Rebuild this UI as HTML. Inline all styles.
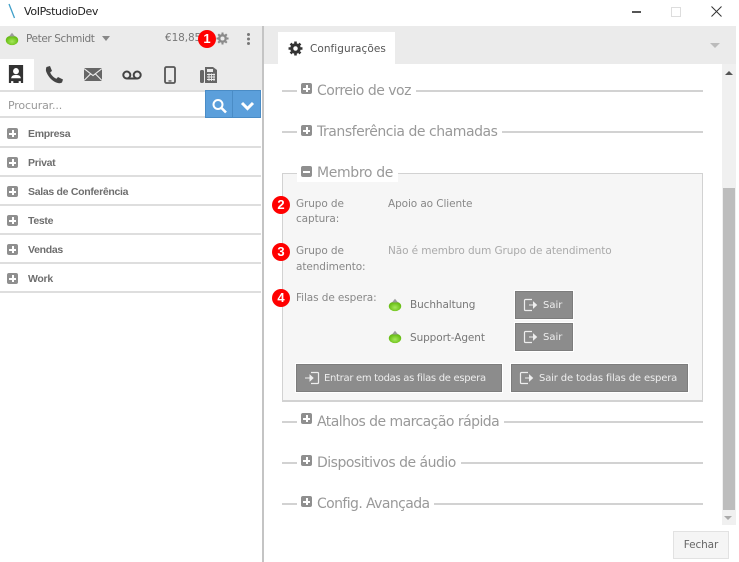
<!DOCTYPE html>
<html><head><meta charset="utf-8">
<style>
html,body{margin:0;padding:0;background:#fff}
#r{position:relative;width:739px;height:562px;overflow:hidden;background:#fff;font-family:"DejaVu Sans","Liberation Sans",sans-serif;color:#777}
#r>*{position:absolute}
.t{white-space:nowrap;position:absolute}
.h{font-size:14px;color:#999;background:#fff;padding:0 5px 0 20px;line-height:18px;white-space:nowrap;position:absolute;left:297px}
.ln{position:absolute;left:282px;width:421px;height:2px;background:#d2d2d2}
.pm{position:absolute;width:11px;height:11px;background:#8f8f8f;border-radius:2px}
.pm:before{content:"";position:absolute;left:2px;top:4.5px;width:7px;height:2px;background:#fff}
.pm.p:after{content:"";position:absolute;left:4.5px;top:2px;width:2px;height:7px;background:#fff}
.row{position:absolute;left:0;width:261px;height:27px;border-bottom:2px solid #dedede}
.row .pm{left:7px;top:9px}
.row .t{left:28px;top:8px;font:bold 10.5px/14px "Liberation Sans",sans-serif;color:#6e6e6e;letter-spacing:-.3px}
.b{position:absolute;width:18px;height:18px;border-radius:50%;background:#f00;color:#fff;font:bold 13px/18px "Liberation Sans",sans-serif;text-align:center;z-index:3}
.lb{font-size:10.5px;color:#888;line-height:15.5px;position:absolute;letter-spacing:-.1px;white-space:nowrap}
.btn{position:absolute;background:#8c8c8c;border:1px solid #7d7d7d;box-sizing:border-box;color:#eee;font-size:10px;white-space:nowrap;box-shadow:0 0 0 1px #fff}
.btn svg{position:absolute;left:7px;top:6px}
.btn span{position:absolute;top:7px;line-height:14px}
.st{position:absolute}
</style></head><body>
<div id="r">
<svg width="0" height="0" style="left:0;top:0"><defs><radialGradient id="g" cx=".5" cy=".62" r=".55"><stop offset="0" stop-color="#a5e85a"/><stop offset="1" stop-color="#62b90e"/></radialGradient></defs></svg>
<!-- title bar -->
<svg style="left:7px;top:3px" width="10" height="16"><path d="M2 1 L7.5 15" stroke="#3f9fc9" stroke-width="1.3"/></svg>
<div class="t" style="left:24px;top:5px;font:11px/14px 'DejaVu Sans',sans-serif;color:#222;letter-spacing:-.35px">VoIPstudioDev</div>
<div style="left:632px;top:11px;width:9px;height:1.5px;background:#555"></div>
<div style="left:671px;top:7px;width:8px;height:8px;border:1px solid #ddd"></div>
<svg style="left:711px;top:6px" width="11" height="11"><path d="M.5 .5L10.5 10.5M10.5 .5L.5 10.5" stroke="#333" stroke-width="1"/></svg>

<!-- left header -->
<div style="left:0;top:26px;width:262px;height:64px;background:#ebebeb"></div>
<svg class="st" style="left:5px;top:32px" width="14" height="14"><ellipse cx="7" cy="8.300" rx="6.200" ry="4.800" fill="url(#g)"/><path d="M7 .8L10 4.500H4Z" fill="#9c9c9c"/></svg>
<div class="t" style="left:26px;top:32px;font-size:10.500px;color:#777;line-height:14px;letter-spacing:-.4px">Peter Schmidt</div>
<div style="left:102px;top:36px;width:0;height:0;border:4.500px solid transparent;border-top:5px solid #888;border-bottom:0"></div>
<div class="t" style="left:165px;top:31px;font-size:10.500px;color:#777;line-height:14px;letter-spacing:-.1px">€18,85</div>
<div class="b" style="left:198px;top:30px">1</div>
<svg style="left:216px;top:32px" width="13" height="13" viewBox="0 0 14 14"><circle cx="7" cy="7" r="3.500" fill="none" stroke="#8a8a8a" stroke-width="2.600"/><path d="M7 .5V13.500M.5 7H13.500M2.400 2.400L11.600 11.600M11.600 2.400L2.400 11.600" stroke="#8a8a8a" stroke-width="2.200" stroke-dasharray="2.300 8.900 2.300"/></svg>
<div style="left:247px;top:33px;width:3px;height:3px;background:#777;border-radius:50%;box-shadow:0 4.500px 0 #777,0 9px 0 #777"></div>

<!-- tabs -->
<div style="left:0;top:59px;width:34px;height:31px;background:#fff"></div>
<svg style="left:8px;top:65px" width="16" height="18" viewBox="0 0 18 19" preserveAspectRatio="none"><path d="M1 0H17V19H14.500V17H12V19H6V17H3.500V19H1Z" fill="#333"/><circle cx="9" cy="6.500" r="3.300" fill="#fff"/><path d="M3.500 14C4 11 6 10.500 9 10.500C12 10.500 14 11 14.500 14Z" fill="#fff"/></svg>
<svg style="left:45px;top:65px" width="19" height="19" viewBox="0 0 19 19"><path d="M1.500 2L5 1L7 6L5.200 7.300C6 10 8.500 12.500 11.500 13.800L13 12L18 14.500L17 17.500C15.500 18.500 13 18.500 10 17C5.500 14.500 2.500 10.500 1 6C.8 4.500 1 3 1.500 2Z" fill="#444"/></svg>
<svg style="left:84px;top:68px" width="18" height="13" viewBox="0 0 18 13"><rect width="18" height="13" fill="#666"/><path d="M0 .5L9 7.500L18 .5M0 12.500L6.500 6M18 12.500L11.500 6" stroke="#eee" stroke-width="1.100" fill="none"/></svg>
<svg style="left:122px;top:70px" width="20" height="10" viewBox="0 0 20 10"><circle cx="4.800" cy="5" r="3.500" fill="none" stroke="#444" stroke-width="2"/><circle cx="15.200" cy="5" r="3.500" fill="none" stroke="#444" stroke-width="2"/><path d="M4.800 8.500H15.200" stroke="#444" stroke-width="2"/></svg>
<svg style="left:164px;top:66px" width="12" height="18" viewBox="0 0 12 18"><rect x="1" y="1" width="10" height="16" rx="1.500" fill="none" stroke="#555" stroke-width="1.800"/><rect x="4.500" y="14.300" width="3" height="1.300" fill="#555"/></svg>
<svg style="left:200px;top:66px" width="18" height="18" viewBox="0 0 18 18"><rect x="0" y="4" width="4" height="13" rx="1.500" fill="#666"/><path d="M5 1H13L17 4V17H5Z" fill="#666"/><rect x="7" y="3" width="6" height="3" fill="#ebebeb"/><path d="M7 8.500H15M7 11H15M7 13.500H15M9 7.500V15M11.500 7.500V15M14 7.500V15" stroke="#ebebeb" stroke-width=".9"/></svg>

<!-- search -->
<div style="left:0;top:90px;width:205px;height:28px;background:#fff;border-top:2px solid #dedede;border-bottom:2px solid #dedede;box-sizing:border-box"></div>
<div class="t" style="left:8px;top:99px;font-size:11px;color:#999;line-height:14px;letter-spacing:-.15px">Procurar...</div>
<div style="left:205px;top:90px;width:28px;height:28px;background:#5b9fdb;border:1px solid #4a8cc6;box-sizing:border-box"></div>
<div style="left:233px;top:90px;width:28px;height:28px;background:#5b9fdb;border:1px solid #4a8cc6;border-left:0;box-sizing:border-box"></div>
<svg style="left:211px;top:98px" width="17" height="16" viewBox="0 0 17 16"><circle cx="7" cy="6.500" r="4.500" fill="none" stroke="#fff" stroke-width="2"/><path d="M10.500 10L15 14.500" stroke="#fff" stroke-width="2.600"/></svg>
<svg style="left:240px;top:101px" width="15" height="10" viewBox="0 0 15 10"><path d="M2 2L7.500 7.500L13 2" fill="none" stroke="#fff" stroke-width="3"/></svg>

<!-- list -->
<div class="row" style="top:119px"><i class="pm p"></i><span class="t">Empresa</span></div>
<div class="row" style="top:148px"><i class="pm p"></i><span class="t">Privat</span></div>
<div class="row" style="top:177px"><i class="pm p"></i><span class="t">Salas de Conferência</span></div>
<div class="row" style="top:206px"><i class="pm p"></i><span class="t">Teste</span></div>
<div class="row" style="top:235px"><i class="pm p"></i><span class="t">Vendas</span></div>
<div class="row" style="top:264px"><i class="pm p"></i><span class="t">Work</span></div>

<!-- splitter -->
<div style="left:262px;top:26px;width:2px;height:536px;background:#c4c4c4"></div>

<!-- right tab bar -->
<div style="left:264px;top:26px;width:472px;height:38px;background:#ebebeb"></div>
<div style="left:278px;top:32px;width:117px;height:32px;background:#fff"></div>
<svg style="left:288px;top:41px" width="15" height="15" viewBox="0 0 14 14"><circle cx="7" cy="7" r="3.500" fill="none" stroke="#333" stroke-width="2.800"/><path d="M7 .5V13.500M.5 7H13.500M2.400 2.400L11.600 11.600M11.600 2.400L2.400 11.600" stroke="#333" stroke-width="2.400" stroke-dasharray="2.300 8.900 2.300"/></svg>
<div class="t" style="left:310px;top:42px;font-size:10.500px;color:#555;line-height:15px;letter-spacing:.05px">Configurações</div>
<div style="left:710px;top:43px;width:0;height:0;border:5px solid transparent;border-top:5px solid #bbb;border-bottom:0"></div>

<!-- scrollbar -->
<div style="left:722px;top:64px;width:14px;height:461px;background:#f0f0f0"></div>
<div style="left:725px;top:71px;width:0;height:0;border:4px solid transparent;border-bottom:4px solid #555;border-top:0"></div>
<div style="left:723px;top:188px;width:12px;height:322px;background:#bdbdbd"></div>
<div style="left:724px;top:516px;width:0;height:0;border:4px solid transparent;border-top:4px solid #aaa;border-bottom:0"></div>

<!-- sections -->
<div class="ln" style="top:90px"></div><div class="h" style="top:82px;letter-spacing:-.5px">Correio de voz</div><div class="pm p" style="left:301px;top:83px"></div>
<div class="ln" style="top:131px"></div><div class="h" style="top:123px;letter-spacing:-.47px">Transferência de chamadas</div><div class="pm p" style="left:301px;top:125px"></div>

<div style="left:282px;top:173px;width:421px;height:229px;box-sizing:border-box;border:1px solid #d2d2d2;border-width:1px 1px 2px 1px;background:#f6f6f6"></div>
<div style="left:297px;top:164px;width:16px;height:11px;background:#fff"></div>
<div class="h" style="top:164px;letter-spacing:-.35px">Membro de</div><div class="pm" style="left:301px;top:166px"></div>

<div class="b" style="left:272px;top:196px">2</div>
<div class="lb" style="left:296px;top:197px;line-height:15px">Grupo de<br>captura:</div>
<div class="lb" style="left:388px;top:197px">Apoio ao Cliente</div>
<div class="b" style="left:272px;top:243px">3</div>
<div class="lb" style="left:296px;top:244px">Grupo de<br>atendimento:</div>
<div class="lb" style="left:388px;top:244px;color:#aaa">Não é membro dum Grupo de atendimento</div>
<div class="b" style="left:272px;top:289px">4</div>
<div class="lb" style="left:296px;top:291px">Filas de espera:</div>

<svg class="st" style="left:388px;top:298px" width="14" height="14"><ellipse cx="7" cy="8.300" rx="6.200" ry="4.800" fill="url(#g)"/><path d="M7 .8L10 4.500H4Z" fill="#9c9c9c"/></svg>
<div class="lb" style="left:410px;top:298px;color:#777">Buchhaltung</div>
<svg class="st" style="left:388px;top:330px" width="14" height="14"><ellipse cx="7" cy="8.300" rx="6.200" ry="4.800" fill="url(#g)"/><path d="M7 .8L10 4.500H4Z" fill="#9c9c9c"/></svg>
<div class="lb" style="left:410px;top:331px;color:#777">Support-Agent</div>

<div class="btn" style="left:515px;top:291px;width:58px;height:28px"><svg width="16" height="14" viewBox="0 0 16 14"><path d="M9 1.500H2.500A1 1 0 0 0 1.500 2.500V11.500A1 1 0 0 0 2.500 12.500H9" fill="none" stroke="#eee" stroke-width="1.200"/><path d="M6 7H12M10.500 4.300L13.500 7L10.500 9.700Z" stroke="#eee" fill="#eee"/></svg><span style="left:27px">Sair</span></div>
<div class="btn" style="left:515px;top:323px;width:58px;height:28px"><svg width="16" height="14" viewBox="0 0 16 14"><path d="M9 1.500H2.500A1 1 0 0 0 1.500 2.500V11.500A1 1 0 0 0 2.500 12.500H9" fill="none" stroke="#eee" stroke-width="1.200"/><path d="M6 7H12M10.500 4.300L13.500 7L10.500 9.700Z" stroke="#eee" fill="#eee"/></svg><span style="left:27px">Sair</span></div>
<div class="btn" style="left:296px;top:364px;width:206px;height:28px"><svg width="16" height="14" viewBox="0 0 16 14"><path d="M7 1.500H13.500A1 1 0 0 1 14.500 2.500V11.500A1 1 0 0 1 13.500 12.500H7" fill="none" stroke="#eee" stroke-width="1.200"/><path d="M1 7H7M6 4.300L9 7L6 9.700Z" stroke="#eee" fill="#eee"/></svg><span style="left:27px;letter-spacing:-.3px">Entrar em todas as filas de espera</span></div>
<div class="btn" style="left:511px;top:364px;width:177px;height:28px"><svg width="16" height="14" viewBox="0 0 16 14"><path d="M9 1.500H2.500A1 1 0 0 0 1.500 2.500V11.500A1 1 0 0 0 2.500 12.500H9" fill="none" stroke="#eee" stroke-width="1.200"/><path d="M6 7H12M10.500 4.300L13.500 7L10.500 9.700Z" stroke="#eee" fill="#eee"/></svg><span style="left:27px;letter-spacing:-.15px">Sair de todas filas de espera</span></div>

<div class="ln" style="top:421px"></div><div class="h" style="top:413px;letter-spacing:-.54px">Atalhos de marcação rápida</div><div class="pm p" style="left:301px;top:413px"></div>
<div class="ln" style="top:462px"></div><div class="h" style="top:454px;letter-spacing:-.5px">Dispositivos de áudio</div><div class="pm p" style="left:301px;top:455px"></div>
<div class="ln" style="top:503px"></div><div class="h" style="top:495px;letter-spacing:-.6px">Config. Avançada</div><div class="pm p" style="left:301px;top:496px"></div>

<!-- close button -->
<div style="left:673px;top:531px;width:56px;height:28px;box-sizing:border-box;background:#f5f5f5;border:1px solid #e2e2e2;font-size:10.500px;color:#666;text-align:center;line-height:26px;letter-spacing:-.1px">Fechar</div>
</div>
</body></html>
